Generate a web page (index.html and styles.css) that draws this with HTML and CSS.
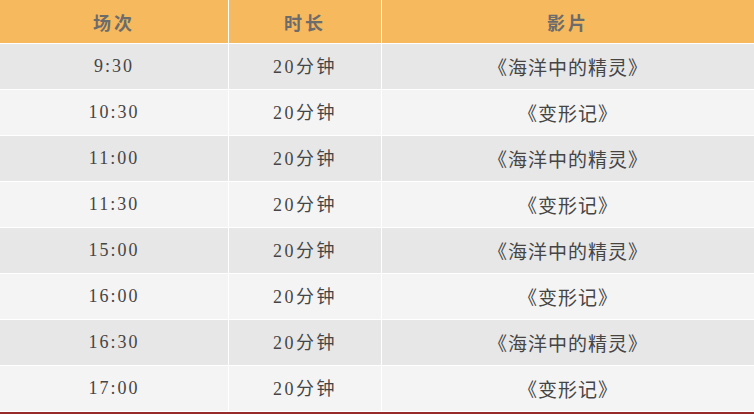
FILE: index.html
```html
<!DOCTYPE html>
<html lang="zh-CN">
<head>
<meta charset="utf-8">
<title>场次</title>
<link rel="stylesheet" href="styles.css">
</head>
<body>
<div class="schedule">
  <div class="cell head">场次</div>
  <div class="cell head">时长</div>
  <div class="cell head">影片</div>

  <div class="cell odd time">9:30</div>
  <div class="cell odd dur">20分钟</div>
  <div class="cell odd film">《海洋中的精灵》</div>

  <div class="cell even time">10:30</div>
  <div class="cell even dur">20分钟</div>
  <div class="cell even film">《变形记》</div>

  <div class="cell odd time">11:00</div>
  <div class="cell odd dur">20分钟</div>
  <div class="cell odd film">《海洋中的精灵》</div>

  <div class="cell even time">11:30</div>
  <div class="cell even dur">20分钟</div>
  <div class="cell even film">《变形记》</div>

  <div class="cell odd time">15:00</div>
  <div class="cell odd dur">20分钟</div>
  <div class="cell odd film">《海洋中的精灵》</div>

  <div class="cell even time">16:00</div>
  <div class="cell even dur">20分钟</div>
  <div class="cell even film">《变形记》</div>

  <div class="cell odd time">16:30</div>
  <div class="cell odd dur">20分钟</div>
  <div class="cell odd film">《海洋中的精灵》</div>

  <div class="cell even time last">17:00</div>
  <div class="cell even dur last">20分钟</div>
  <div class="cell even film last">《变形记》</div>
</div>
</body>
</html>
```
FILE: styles.css
```css
html, body {
  margin: 0;
  padding: 0;
  background: #ffffff;
}

.schedule {
  display: grid;
  grid-template-columns: 229px 153px 1fr;
  grid-auto-rows: 46px;
  grid-template-rows: 44px;
  border-bottom: 3px solid #972b2b;
  font-family: "Liberation Serif", "Noto Sans CJK SC", serif;
  font-size: 18px;
  line-height: 1;
  color: #454545;
  letter-spacing: 2px;
}

.cell {
  box-sizing: border-box;
  display: flex;
  align-items: center;
  justify-content: center;
  border-right: 1px solid #ffffff;
  border-bottom: 1px solid #ffffff;
  white-space: nowrap;
}

.cell:nth-child(3n) {
  border-right: none;
}

.head {
  background: #f6b95d;
  color: #6c6c6c;
  font-family: "Noto Sans CJK SC", sans-serif;
  font-weight: bold;
  font-size: 18px;
  letter-spacing: 3px;
}

.odd {
  background: #e7e7e7;
}

.even {
  background: #f4f4f4;
}

.time {
  padding-bottom: 2px;
}

.dur {
  letter-spacing: 2.5px;
}

.film {
  font-family: "Noto Sans CJK SC", sans-serif;
  font-size: 19px;
  letter-spacing: 1px;
}

.last {
  border-bottom: none;
  height: 45px;
}
```
